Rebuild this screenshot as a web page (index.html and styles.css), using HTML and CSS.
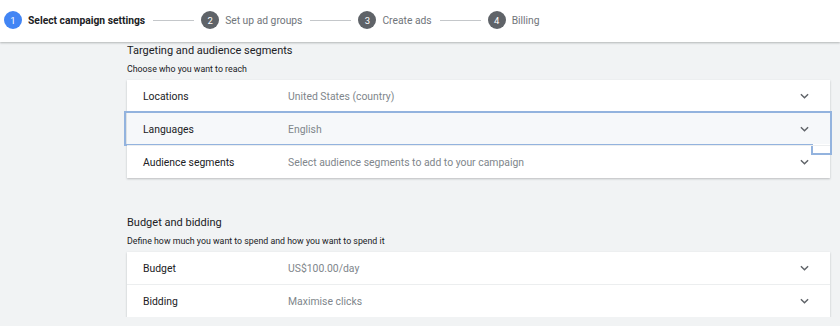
FILE: index.html
```html
<!DOCTYPE html>
<html lang="en">
<head>
    <meta charset="UTF-8">
    <meta name="viewport" content="width=device-width, initial-scale=1.0">
    <title>New campaign</title>
    <link rel="stylesheet" href="styles.css">
</head>
<body>
    <div class="stepper">
        <div class="step active"><span class="num">1</span><span class="label">Select campaign settings</span></div>
        <div class="line"></div>
        <div class="step"><span class="num">2</span><span class="label">Set up ad groups</span></div>
        <div class="line"></div>
        <div class="step"><span class="num">3</span><span class="label">Create ads</span></div>
        <div class="line"></div>
        <div class="step"><span class="num">4</span><span class="label">Billing</span></div>
    </div>

    <div class="content">
        <div class="section">
            <h2>Targeting and audience segments</h2>
            <p class="hint">Choose who you want to reach</p>
            <div class="card">
                <div class="row">
                    <span class="name">Locations</span>
                    <span class="value">United States (country)</span>
                    <svg class="chev" viewBox="0 0 10 6"><path d="M1 1l4 4 4-4"/></svg>
                </div>
                <div class="row focused">
                    <span class="name">Languages</span>
                    <span class="value">English</span>
                    <svg class="chev" viewBox="0 0 10 6"><path d="M1 1l4 4 4-4"/></svg>
                    <div class="focus-ring"></div>
                    <div class="focus-tail"></div>
                </div>
                <div class="row">
                    <span class="name">Audience segments</span>
                    <span class="value">Select audience segments to add to your campaign</span>
                    <svg class="chev" viewBox="0 0 10 6"><path d="M1 1l4 4 4-4"/></svg>
                </div>
            </div>
        </div>

        <div class="section">
            <h2>Budget and bidding</h2>
            <p class="hint">Define how much you want to spend and how you want to spend it</p>
            <div class="card">
                <div class="row">
                    <span class="name">Budget</span>
                    <span class="value">US$100.00/day</span>
                    <svg class="chev" viewBox="0 0 10 6"><path d="M1 1l4 4 4-4"/></svg>
                </div>
                <div class="row">
                    <span class="name">Bidding</span>
                    <span class="value">Maximise clicks</span>
                    <svg class="chev" viewBox="0 0 10 6"><path d="M1 1l4 4 4-4"/></svg>
                </div>
            </div>
        </div>
    </div>
</body>
</html>
```

FILE: styles.css
```css
* {
    box-sizing: border-box;
    font-family: Roboto, "Liberation Sans", Arial, sans-serif;
}

body {
    margin: 0;
    background-color: #f1f3f4;
    color: #202124;
}

.stepper {
    height: 42px;
    background-color: #ffffff;
    box-shadow: 0 1px 2px rgba(60, 64, 67, 0.35);
    display: flex;
    align-items: center;
    padding: 0 0 2px 4px;
}

.step {
    display: flex;
    align-items: center;
    gap: 6px;
}

.num {
    width: 18px;
    height: 18px;
    border-radius: 50%;
    background-color: #5f6368;
    color: #ffffff;
    font-size: 9.5px;
    display: flex;
    align-items: center;
    justify-content: center;
}

.label {
    font-size: 10.3px;
    color: #70757a;
}

.step.active .num {
    background-color: #4285f4;
}

.step.active .label {
    color: #202124;
    font-weight: bold;
}

.line {
    width: 41px;
    height: 1px;
    background-color: #c4c7ca;
    margin: 0 7px 0 8px;
}

.content {
    padding: 1px 10px 0 127px;
}

.section h2 {
    font-size: 11px;
    font-weight: normal;
    margin: 0;
    line-height: 16px;
}

.section + .section {
    margin-top: 37px;
}

.hint {
    font-size: 8.8px;
    margin: 4px 0 5px;
    line-height: 12px;
}

.card {
    background-color: #ffffff;
    box-shadow: 0 1px 2px rgba(60, 64, 67, 0.3);
}

.row {
    position: relative;
    height: 33px;
    display: flex;
    align-items: center;
    padding: 0 21px 0 16px;
    font-size: 10.4px;
    border-top: 1px solid #eceeef;
}

.row:first-child {
    border-top: none;
    height: 32px;
}

.row.focused {
    background-color: #f6f8fa;
}

.name {
    width: 145px;
    color: #202124;
}

.value {
    flex: 1;
    color: #80868b;
}

.chev {
    width: 9px;
    height: 6px;
    fill: none;
    stroke: #5f6368;
    stroke-width: 1.6;
}

.focus-ring {
    position: absolute;
    left: -3px;
    right: -2px;
    top: -2px;
    bottom: -1px;
    border: 2px solid #93b3de;
}

.focus-tail {
    position: absolute;
    right: -2px;
    width: 21px;
    height: 11px;
    top: calc(100% - 1px);
    border: 2px solid #93b3de;
    border-top: none;
    background-color: #ffffff;
}
```
